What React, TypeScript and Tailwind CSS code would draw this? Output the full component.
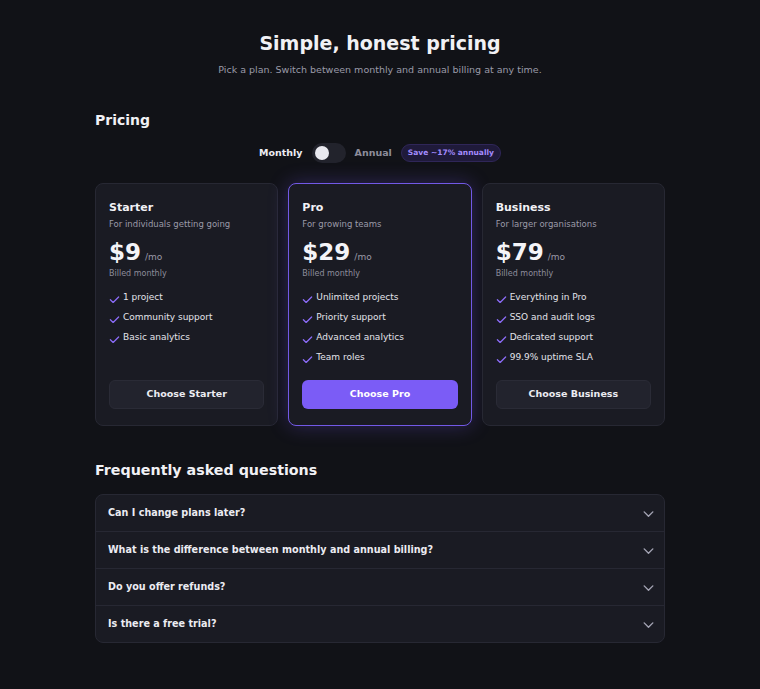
import { useState } from 'react'

type Plan = {
  name: string
  blurb: string
  price: number
  features: string[]
  featured?: boolean
}

const plans: Plan[] = [
  {
    name: 'Starter',
    blurb: 'For individuals getting going',
    price: 9,
    features: ['1 project', 'Community support', 'Basic analytics'],
  },
  {
    name: 'Pro',
    blurb: 'For growing teams',
    price: 29,
    features: ['Unlimited projects', 'Priority support', 'Advanced analytics', 'Team roles'],
    featured: true,
  },
  {
    name: 'Business',
    blurb: 'For larger organisations',
    price: 79,
    features: ['Everything in Pro', 'SSO and audit logs', 'Dedicated support', '99.9% uptime SLA'],
  },
]

const faqs = [
  'Can I change plans later?',
  'What is the difference between monthly and annual billing?',
  'Do you offer refunds?',
  'Is there a free trial?',
]

function Check() {
  return (
    <svg width="11" height="11" viewBox="0 0 12 12" fill="none" className="mt-[3px] shrink-0">
      <path d="M1.5 7.3 L4.5 10.3 L10.5 4.3" stroke="#8b6cf6" strokeWidth="1.4" strokeLinecap="round" strokeLinejoin="round" />
    </svg>
  )
}

function Chevron() {
  return (
    <svg width="13" height="13" viewBox="0 0 12 12" fill="none">
      <path d="M2 4.5 L6 8.5 L10 4.5" stroke="#a3a3b3" strokeWidth="1.3" strokeLinecap="round" strokeLinejoin="round" />
    </svg>
  )
}

export default function App() {
  const [annual, setAnnual] = useState(false)

  return (
    <main className="min-h-screen bg-[#111217] pb-12 pt-[31px] text-[#e8e8ee] [font-family:'DejaVu_Sans',sans-serif]">
      <div className="mx-auto w-[570px]">
        <div className="text-center">
          <h1 className="text-[19px] font-bold leading-[24px] text-[#f1f1f5]">Simple, honest pricing</h1>
          <p className="mt-[8px] text-[9.5px] leading-[14px] text-[#9a9aa8]">
            Pick a plan. Switch between monthly and annual billing at any time.
          </p>
        </div>

        <h2 className="mt-[33px] text-[14px] font-bold leading-[20px] text-[#f1f1f5]">Pricing</h2>

        <div className="mt-[13px] flex h-[20px] items-center justify-center gap-[9px] text-[9.5px] font-bold">
          <span className="text-[#ececf2]">Monthly</span>
          <button
            type="button"
            onClick={() => setAnnual(!annual)}
            className="flex h-[20px] w-[34px] items-center rounded-full bg-[#22232c] px-[3px]"
          >
            <span className={`h-[14px] w-[14px] rounded-full bg-[#e9e9ef] ${annual ? 'ml-[14px]' : ''}`} />
          </button>
          <span className="text-[#8d8d9b]">Annual</span>
          <span className="rounded-full border border-[#2f2658] bg-[#1f1a3a] px-[6px] py-[2px] text-[7.5px] text-[#a48cff]">
            Save ~17% annually
          </span>
        </div>

        <div className="mt-[20px] grid grid-cols-3 gap-[10px]">
          {plans.map((p) => (
            <div
              key={p.name}
              className={`flex flex-col rounded-[8px] border bg-[#1a1b23] px-[13px] pb-[16px] pt-[16px] ${
                p.featured
                  ? 'border-[#7259e6] shadow-[0_0_20px_rgba(124,92,255,0.28)]'
                  : 'border-[#272833]'
              }`}
            >
              <div className="text-[11px] font-bold leading-[16px] text-[#f1f1f5]">{p.name}</div>
              <div className="mt-[2px] text-[8.5px] leading-[12px] text-[#9a9aa8]">{p.blurb}</div>
              <div className="mt-[7px] flex items-baseline gap-[4px]">
                <span className="text-[23px] font-bold leading-[30px] text-[#f4f4f8]">${p.price}</span>
                <span className="text-[9px] text-[#9a9aa8]">{annual ? '/yr' : '/mo'}</span>
              </div>
              <div className="mt-[2px] text-[8px] leading-[10px] text-[#8d8d9b]">
                {annual ? 'Billed annually' : 'Billed monthly'}
              </div>
              <ul className="mb-[16px] mt-[11px] flex flex-col gap-[6px]">
                {p.features.map((f) => (
                  <li key={f} className="flex h-[14px] gap-[3px] text-[9px] leading-[14px] text-[#e3e3ea]">
                    <Check />
                    {f}
                  </li>
                ))}
              </ul>
              <button
                type="button"
                className={`mt-auto h-[29px] rounded-[6px] text-[9.5px] font-bold ${
                  p.featured
                    ? 'bg-[#7b5cf6] text-white'
                    : 'border border-[#2a2b36] bg-[#22232d] text-[#ececf2]'
                }`}
              >
                Choose {p.name}
              </button>
            </div>
          ))}
        </div>

        <h2 className="mt-[34px] text-[14.25px] font-bold leading-[20px] text-[#f1f1f5]">Frequently asked questions</h2>

        <div className="mt-[14px] overflow-hidden rounded-[8px] border border-[#272833] bg-[#1a1b23]">
          {faqs.map((q, i) => (
            <div
              key={q}
              className={`flex items-center justify-between pl-[12px] pr-[9px] ${
                i > 0 ? 'h-[37px] border-t border-[#272833]' : 'h-[36px]'
              }`}
            >
              <span className="text-[9.65px] font-bold text-[#ececf2]">{q}</span>
              <Chevron />
            </div>
          ))}
        </div>
      </div>
    </main>
  )
}
